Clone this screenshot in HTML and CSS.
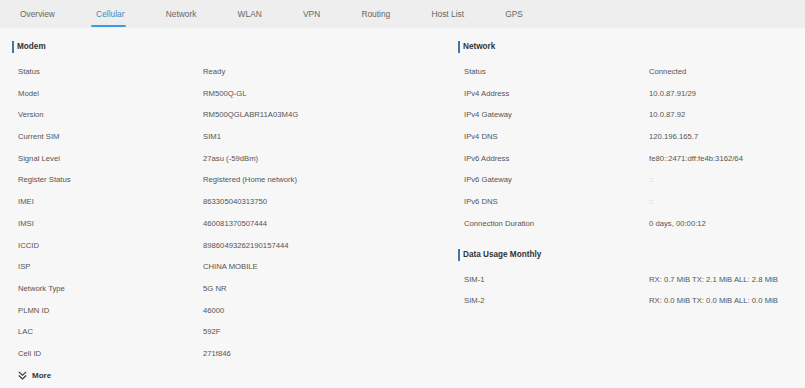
FILE: index.html
```html
<!DOCTYPE html>
<html>
<head>
<meta charset="utf-8">
<link rel="stylesheet" href="styles.css">
</head>
<body>
<nav class="tabs">
  <span class="tab">Overview</span>
  <span class="tab active">Cellular</span>
  <span class="tab">Network</span>
  <span class="tab">WLAN</span>
  <span class="tab">VPN</span>
  <span class="tab">Routing</span>
  <span class="tab">Host List</span>
  <span class="tab">GPS</span>
</nav>
<main class="content">
  <section class="col col-left">
    <h2 class="head">Modem</h2>
    <div class="row"><span class="lbl">Status</span><span class="val">Ready</span></div>
    <div class="row"><span class="lbl">Model</span><span class="val">RM500Q-GL</span></div>
    <div class="row"><span class="lbl">Version</span><span class="val">RM500QGLABR11A03M4G</span></div>
    <div class="row"><span class="lbl">Current SIM</span><span class="val">SIM1</span></div>
    <div class="row"><span class="lbl">Signal Level</span><span class="val">27asu (-59dBm)</span></div>
    <div class="row"><span class="lbl">Register Status</span><span class="val">Registered (Home network)</span></div>
    <div class="row"><span class="lbl">IMEI</span><span class="val">863305040313750</span></div>
    <div class="row"><span class="lbl">IMSI</span><span class="val">460081370507444</span></div>
    <div class="row"><span class="lbl">ICCID</span><span class="val">89860493262190157444</span></div>
    <div class="row"><span class="lbl">ISP</span><span class="val">CHINA MOBILE</span></div>
    <div class="row"><span class="lbl">Network Type</span><span class="val">5G NR</span></div>
    <div class="row"><span class="lbl">PLMN ID</span><span class="val">46000</span></div>
    <div class="row"><span class="lbl">LAC</span><span class="val">592F</span></div>
    <div class="row"><span class="lbl">Cell ID</span><span class="val">271f846</span></div>
    <div class="row more">
      <svg class="chev" width="9" height="9" viewBox="0 0 9 9"><path d="M0.8 0.8 L4.5 4.2 L8.2 0.8 M0.8 4.5 L4.5 7.9 L8.2 4.5" fill="none" stroke="#333" stroke-width="1.1"/></svg>
      <span class="more-txt">More</span>
    </div>
  </section>
  <section class="col col-right">
    <h2 class="head">Network</h2>
    <div class="row"><span class="lbl">Status</span><span class="val">Connected</span></div>
    <div class="row"><span class="lbl">IPv4 Address</span><span class="val">10.0.87.91/29</span></div>
    <div class="row"><span class="lbl">IPv4 Gateway</span><span class="val">10.0.87.92</span></div>
    <div class="row"><span class="lbl">IPv4 DNS</span><span class="val">120.196.165.7</span></div>
    <div class="row"><span class="lbl">IPv6 Address</span><span class="val">fe80::2471:dff:fe4b:3162/64</span></div>
    <div class="row"><span class="lbl">IPv6 Gateway</span><span class="val faint">::</span></div>
    <div class="row"><span class="lbl">IPv6 DNS</span><span class="val faint">::</span></div>
    <div class="row"><span class="lbl">Connection Duration</span><span class="val">0 days, 00:00:12</span></div>
    <h2 class="head head-gap">Data Usage Monthly</h2>
    <div class="row"><span class="lbl">SIM-1</span><span class="val">RX: 0.7 MiB TX: 2.1 MiB ALL: 2.8 MiB</span></div>
    <div class="row"><span class="lbl">SIM-2</span><span class="val">RX: 0.0 MiB TX: 0.0 MiB ALL: 0.0 MiB</span></div>
  </section>
</main>
</body>
</html>
```
FILE: styles.css
```css
html, body {
  margin: 0;
  padding: 0;
}
body {
  background: #f7f7f7;
  font-family: "Liberation Sans", Arial, sans-serif;
  color: #555;
  width: 805px;
  height: 388px;
  overflow: hidden;
}
.tabs {
  display: flex;
  height: 28px;
  background: #eeeeef;
  align-items: stretch;
}
.tab {
  position: relative;
  padding: 0 20.6px;
  font-size: 8.4px;
  line-height: 28px;
  color: #666;
}
.tab:first-child {
  padding-left: 20px;
}
.tab.active {
  color: #4d86b8;
}
.tab.active::after {
  content: "";
  position: absolute;
  left: 15px;
  right: 19px;
  bottom: 1px;
  height: 2px;
  background: #3a9ee4;
  border-radius: 1px;
}
.content {
  display: grid;
  grid-template-columns: 446px 1fr;
  padding-top: 13px;
}
.col {
  padding-left: 12px;
}
.head {
  margin: 0 0 8px 0;
  height: 12px;
  line-height: 12px;
  font-size: 8.2px;
  font-weight: bold;
  color: #333;
  border-left: 2px solid #3d78a8;
  padding-left: 3px;
  display: flex;
  align-items: center;
}
.head-gap {
  margin-top: 14.25px;
}
.row {
  display: grid;
  grid-template-columns: 185px 1fr;
  height: 21.7px;
  line-height: 21.7px;
  padding-left: 6px;
  font-size: 7.7px;
  color: #555;
}
.val {
  color: #555;
}
.val.faint {
  color: #bbb;
}
.row.more {
  display: flex;
  align-items: center;
  gap: 5px;
}
.chev {
  display: block;
}
.more-txt {
  font-weight: bold;
  font-size: 8px;
  color: #333;
}
```
